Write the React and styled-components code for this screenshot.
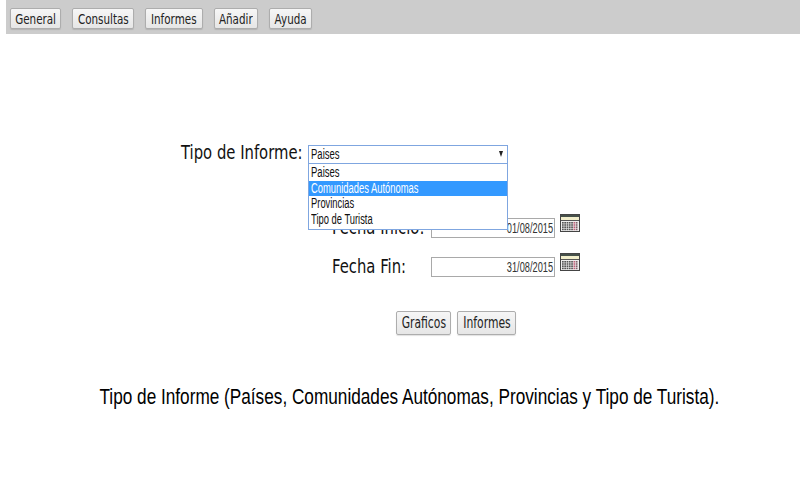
import React from 'react';
import styled, { createGlobalStyle } from 'styled-components';

const Global = createGlobalStyle`
  html, body { margin: 0; padding: 0; background: #fff; }
  body { width: 800px; height: 500px; overflow: hidden; font-family: "DejaVu Sans", sans-serif; color: #111; }
`;

// the whole screenshot is squeezed horizontally, so text gets narrowed too
const Squeeze = styled.span`
  display: inline-block;
  white-space: nowrap;
  transform: scaleX(${p => p.$x});
  transform-origin: ${p => p.$origin || 'left'} center;
`;

const Nav = styled.nav`
  margin-left: 6px;
  height: 34px;
  background: #cccccc;
  display: flex;
  align-items: flex-start;
  gap: 11px;
  padding: 8px 0 0 4px;
  box-sizing: border-box;
`;

const Button = styled.button`
  box-sizing: border-box;
  width: ${p => p.$w}px;
  height: ${p => p.$h || 21}px;
  padding: 0;
  border: 1px solid #adadad;
  border-radius: 2px;
  background: linear-gradient(#f6f6f6, #e6e6e6);
  box-shadow: 0 1px 1px rgba(0, 0, 0, 0.12);
  font-family: "DejaVu Sans", sans-serif;
  font-size: ${p => p.$fs || 14}px;
  color: #222;
  display: flex;
  align-items: center;
  justify-content: center;
  overflow: visible;
`;

const ButtonText = styled(Squeeze)`
  flex: none;
  transform-origin: center;
`;

const Form = styled.form`
  margin: 0;
  padding-top: 111px;
  height: 191px;
  display: flex;
  flex-direction: column;
`;

const TipoRow = styled.div`
  display: flex;
  align-items: flex-start;
  padding-left: 181px;
  height: 73px;
`;

const BigLabel = styled.label`
  display: block;
  font-size: 19px;
  line-height: 19px;
  white-space: nowrap;
`;

const TipoLabel = styled(BigLabel)`
  width: 127px;
  margin-top: -2px;
`;

const SelectWrap = styled.div`
  position: relative;
  width: 200px;
`;

const SelectBox = styled.div`
  box-sizing: border-box;
  height: 19px;
  border: 1px solid #7fa6e0;
  background: #fff;
  display: flex;
  align-items: center;
  justify-content: space-between;
  padding: 0 4px 1px 2px;
  font-family: "Liberation Sans", sans-serif;
  font-size: 14px;
`;

const Arrow = styled.span`
  flex: none;
  width: 0;
  height: 0;
  border-left: 2.5px solid transparent;
  border-right: 2.5px solid transparent;
  border-top: 6px solid #222;
`;

const Dropdown = styled.ul`
  position: absolute;
  z-index: 2;
  top: 18px;
  left: 0;
  right: 0;
  margin: 0;
  padding: 0 0 1px;
  list-style: none;
  box-sizing: border-box;
  border: 1px solid #7fa6e0;
  background: #fff;
`;

const Option = styled.li`
  height: ${p => p.$h}px;
  line-height: ${p => p.$h}px;
  padding-left: 2px;
  font-family: "Liberation Sans", sans-serif;
  font-size: 14px;
  white-space: nowrap;
  overflow: hidden;
  background: ${p => (p.$active ? '#3399ff' : 'transparent')};
  color: ${p => (p.$active ? '#fff' : '#111')};
`;

const DateRow = styled.div`
  display: grid;
  grid-template-columns: 99px 124px 26px;
  align-items: start;
  padding-left: 332px;
  height: 39px;
`;

const DateField = styled.div`
  box-sizing: border-box;
  width: 124px;
  height: 20px;
  padding-right: 1px;
  border: 1px solid #a9a9a9;
  display: flex;
  align-items: center;
  justify-content: flex-end;
  font-family: "Liberation Sans", sans-serif;
  font-size: 14px;
  color: #333;
  background: #fff;
`;

const CalendarSvg = styled.svg`
  display: block;
  margin: -4px 0 0 5px;
`;

const Actions = styled.div`
  display: flex;
  gap: 6px;
  padding-left: 396px;
  margin-top: 15px;
`;

const Caption = styled.p`
  display: flex;
  justify-content: center;
  margin: 48px 0 0;
  padding-left: 18px;
  font-family: "Liberation Sans", sans-serif;
  font-size: 21.5px;
  line-height: 26px;
  color: #000;
`;

const CaptionText = styled(Squeeze)`
  flex: none;
  transform-origin: center;
`;

function Calendar() {
  const cells = [];
  for (let r = 0; r < 4; r++) {
    for (let c = 0; c < 7; c++) {
      cells.push(
        <rect key={`${r}-${c}`} x={2 + c * 2.3} y={8 + r * 2.2} width="1.7" height="1.6"
          fill={c === 5 ? '#c0607a' : c === 6 ? '#80606a' : '#555'} />
      );
    }
  }
  return (
    <CalendarSvg width="20" height="18" viewBox="0 0 20 18">
      <rect x="0.5" y="0.5" width="19" height="17" fill="#eee" stroke="#444" />
      <rect x="1" y="1" width="18" height="2" fill="#45504a" />
      <rect x="1" y="3" width="18" height="3" fill="#f1eecb" />
      <rect x="1" y="6" width="18" height="1" fill="#555" />
      {cells}
    </CalendarSvg>
  );
}

export default function App() {
  return (
    <>
      <Global />
      <Nav>
        <Button type="button" $w={51}><ButtonText $x={0.74}>General</ButtonText></Button>
        <Button type="button" $w={62}><ButtonText $x={0.74}>Consultas</ButtonText></Button>
        <Button type="button" $w={58}><ButtonText $x={0.74}>Informes</ButtonText></Button>
        <Button type="button" $w={44}><ButtonText $x={0.74}>Añadir</ButtonText></Button>
        <Button type="button" $w={43}><ButtonText $x={0.74}>Ayuda</ButtonText></Button>
      </Nav>
      <Form>
        <TipoRow>
          <TipoLabel><Squeeze $x={0.78}>Tipo de Informe:</Squeeze></TipoLabel>
          <SelectWrap>
            <SelectBox><Squeeze $x={0.68}>Paises</Squeeze><Arrow /></SelectBox>
            <Dropdown>
              <Option $h={17}><Squeeze $x={0.68}>Paises</Squeeze></Option>
              <Option $h={15} $active><Squeeze $x={0.67}>Comunidades Autónomas</Squeeze></Option>
              <Option $h={15}><Squeeze $x={0.67}>Provincias</Squeeze></Option>
              <Option $h={17}><Squeeze $x={0.67}>Tipo de Turista</Squeeze></Option>
            </Dropdown>
          </SelectWrap>
        </TipoRow>
        <DateRow>
          <BigLabel><Squeeze $x={0.78}>Fecha Inicio:</Squeeze></BigLabel>
          <DateField><Squeeze $x={0.66} $origin="right">01/08/2015</Squeeze></DateField>
          <Calendar />
        </DateRow>
        <DateRow>
          <BigLabel><Squeeze $x={0.78}>Fecha Fin:</Squeeze></BigLabel>
          <DateField><Squeeze $x={0.66} $origin="right">31/08/2015</Squeeze></DateField>
          <Calendar />
        </DateRow>
        <Actions>
          <Button type="button" $w={55} $h={24} $fs={15}><ButtonText $x={0.72}>Graficos</ButtonText></Button>
          <Button type="button" $w={59} $h={24} $fs={15}><ButtonText $x={0.72}>Informes</ButtonText></Button>
        </Actions>
      </Form>
      <Caption><CaptionText $x={0.8}>Tipo de Informe (Países, Comunidades Autónomas, Provincias y Tipo de Turista).</CaptionText></Caption>
    </>
  );
}
